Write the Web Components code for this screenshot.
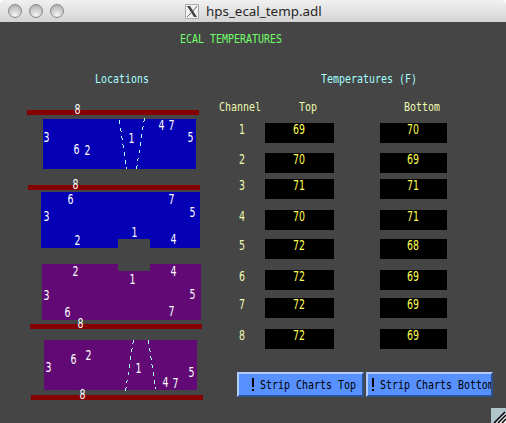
<!DOCTYPE html>
<html lang="en">
<head>
<meta charset="utf-8">
<title>hps_ecal_temp.adl</title>
<style>
html,body{margin:0;width:506px;height:423px;overflow:hidden;background:#fff}
</style>
</head>
<body>
<ecal-window></ecal-window>
<script>
const define = (name, html, init) => customElements.define(name, class extends HTMLElement {
  connectedCallback() {
    if (this.shadowRoot) return;
    const root = this.attachShadow({mode: 'open'});
    root.innerHTML = html;
    if (init) init.call(this, root);
  }
});

// Narrow fixed-pitch lettering: six pixels per cell, stretched vertically.
define('x-text', `
<style>
:host{display:block;height:14px;font:9.966px/14px "DejaVu Sans Mono",monospace}
:host([digits]){font:10.47px/14px "DejaVu Sans Condensed","DejaVu Sans",sans-serif}
span{display:block;width:max-content;white-space:pre;transform:scaleY(1.3);transform-origin:50% 7px}
:host([digits]) span{transform:translateY(-1px) scaleY(1.28)}
</style><span><slot></slot></span>`);

define('title-bar', `
<style>
:host{display:flex;align-items:center;box-sizing:border-box;height:22px;padding-left:8px;background:linear-gradient(#f0f0f0,#e3e3e3 50%,#d4d4d4);border-radius:5px 5px 0 0}
.dots{display:flex;gap:7px;width:177px}
i{width:12px;height:12px;border:1px solid #8a8a8a;border-radius:50%;background:radial-gradient(circle at 50% 85%,#f5f5f5,#d2d2d2 45%,#a6a6a6 100%)}
svg{width:14px;height:15px;margin-right:7px}
b{font:13.4px/20px "Noto Sans",sans-serif;color:#262626}
</style>
<div class="dots"><i></i><i></i><i></i></div>
<svg viewBox="0 0 14 15"><rect x=".5" y=".5" width="13" height="14" fill="#f2f2f0" stroke="#aaa"/><path d="M2 2h3l7 11H9z" fill="#444"/><path d="M12 2 8 7M6 9 2 13" stroke="#666" fill="none"/></svg>
<b><slot></slot></b>`);

define('sensor-map', `
<style>
:host{display:block;position:relative;width:210px;height:322px;color:#fff}
svg{display:block;width:210px;height:322px}
x-text{position:absolute;width:6px}
</style>
<svg viewBox="0 101 210 322" shape-rendering="crispEdges">
<path fill="#850000" d="M27 110h172v5H27zM28 185h172v5H28zM30 324h172v5H30zM31 395h172v5H31z"/>
<path fill="#0500b5" d="M43 119h153v50H43zM41 192h159v56h-50v-9h-32v9H41z"/>
<path fill="#610a75" d="M42 264h76v7h32v-7h51v56H42zM44 340h153v50H44z"/>
<path stroke="#a4ffff" fill="none" stroke-dasharray="4 4" d="M119.500 120 126.500 169M144.500 118 136.500 169M133.500 340 125.500 391M148.500 340 155.500 389"/>
</svg>`, function (root) {
  const marks = [[8,77.5,110],[3,46.5,138],[6,76.5,150],[2,87.5,151],[1,131.5,139],[4,161.5,126],[7,171.5,126],[5,190.5,138],
    [8,75.5,185],[6,70.5,200],[7,171.5,200],[3,46.5,217],[5,192.5,213],[1,134.5,233],[2,77.5,241],[4,173.5,240],
    [2,75.5,272],[4,173.5,272],[1,132.5,280],[3,46.5,296],[5,192.5,295],[6,67.5,313],[7,171.5,312],[8,80.5,324],
    [3,48.5,368],[6,73.5,360],[2,88.5,356],[1,138.5,369],[4,165.5,383],[7,175.5,384],[5,191.5,373],[8,82.5,395]];
  for (const [n, x, y] of marks) {
    const t = document.createElement('x-text');
    t.setAttribute('digits', '');
    t.textContent = n;
    t.style.left = (x - 3) + 'px';
    t.style.top = (y - 108) + 'px';
    root.append(t);
  }
});

define('temp-row', `
<style>
:host{display:grid;grid-template-columns:36px 69px 46px 67px;justify-content:start;height:20px}
.n{padding-left:10px;color:#eefab0}
.v{background:#000;color:#ffff50;display:flex;justify-content:center;height:20px}
.v x-text{margin-left:-1px}
</style>
<x-text class="n" digits></x-text><div class="v"><x-text digits></x-text></div><span></span><div class="v"><x-text digits></x-text></div>`,
function (root) {
  const t = root.querySelectorAll('x-text');
  ['channel', 'top', 'bottom'].forEach((k, i) => { t[i].textContent = this.getAttribute(k); });
});

define('chart-button', `
<style>
:host{display:flex;box-sizing:border-box;width:127px;height:25px;border:2px solid;border-color:#b0cbff #2c5291 #2c5291 #b0cbff;background:#5791ff;color:#000;overflow:hidden;padding:4px 0 0 var(--inset,13px)}
svg{flex:none;width:8px;height:14px}
</style>
<svg viewBox="0 0 8 14"><path d="M0 0h2v9H0zM0 11h2v2H0z" fill="#000" shape-rendering="crispEdges"/></svg>
<x-text><slot></slot></x-text>`);

define('ecal-window', `
<style>
:host{display:flex;flex-direction:column;width:506px;height:423px;background:linear-gradient(#fff 22px,#454545 22px);position:relative}
.title{padding:10px 0 10px 180px;color:#72ff6c}
.heads{display:grid;grid-template-columns:321px 1fr;height:45px;color:#a4ffff;align-items:center}
.heads x-text:first-child{padding-left:95px}
.main{display:grid;grid-template-columns:210px 1fr;height:322px}
.cols{display:grid;grid-template-columns:80px 105px 1fr;margin-top:-1px;padding:0 0 9px 9px;color:#eefab0;height:14px}
.table{display:flex;flex-direction:column}
temp-row{padding-left:19px}
.buttons{display:flex;gap:2px;padding:23px 0 0 27px}
.grip{position:absolute;right:0;bottom:0;width:15px;height:15px}
</style>
<title-bar>hps_ecal_temp.adl</title-bar>
<x-text class="title">ECAL TEMPERATURES</x-text>
<div class="heads"><x-text>Locations</x-text><x-text>Temperatures (F)</x-text></div>
<div class="main"><sensor-map></sensor-map>
<div class="table"><div class="cols"><x-text>Channel</x-text><x-text>Top</x-text><x-text>Bottom</x-text></div>
<temp-row channel="1" top="69" bottom="70"></temp-row>
<temp-row channel="2" top="70" bottom="69" style="margin-top:10px"></temp-row>
<temp-row channel="3" top="71" bottom="71" style="margin-top:6px"></temp-row>
<temp-row channel="4" top="70" bottom="71" style="margin-top:11px"></temp-row>
<temp-row channel="5" top="72" bottom="68" style="margin-top:9px"></temp-row>
<temp-row channel="6" top="72" bottom="69" style="margin-top:11px"></temp-row>
<temp-row channel="7" top="72" bottom="69" style="margin-top:8px"></temp-row>
<temp-row channel="8" top="72" bottom="69" style="margin-top:11px"></temp-row>
<div class="buttons"><chart-button>Strip Charts Top</chart-button><chart-button style="--inset:4px">Strip Charts Bottom</chart-button></div>
</div></div>
<svg class="grip" viewBox="0 0 15 15"><path fill="#b0c4cc" d="M0 0h15v15H0z"/><path fill="#eee" d="M5 15 15 5v10z"/><path d="M3 15 14 4M7 15l8-8M11 15l4-4" stroke="#000" stroke-width="1.500"/></svg>`);
</script>
</body>
</html>
